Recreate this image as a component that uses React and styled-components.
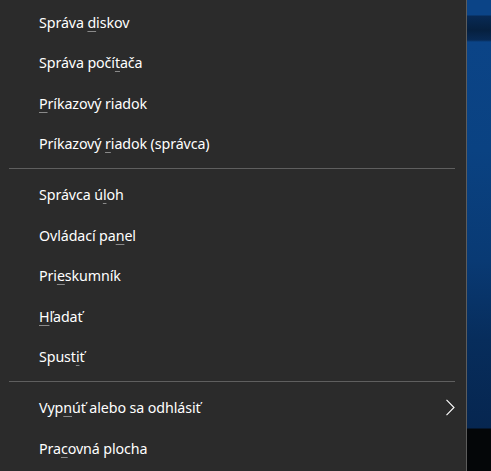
import React from "react";
import styled, { createGlobalStyle } from "styled-components";

const GlobalStyle = createGlobalStyle`
  html, body {
    margin: 0;
    padding: 0;
    background: #2b2b2b;
  }
  body {
    font-family: "Noto Sans", "Open Sans", "Liberation Sans", sans-serif;
  }
`;

const Screen = styled.div`
  display: flex;
  width: 491px;
  height: 471px;
  overflow: hidden;
`;

const Menu = styled.div`
  width: 467px;
  flex-shrink: 0;
  background: #2b2b2b;
  border-right: 1px solid #5c5c5c;
  padding-top: 2px;
  box-sizing: border-box;
`;

const Desktop = styled.div`
  flex: 1;
  background: linear-gradient(
    to bottom,
    #0b4487 0px,
    #0b4487 15px,
    #082a55 16px,
    #06203f 30px,
    #082a55 40px,
    #0b4487 42px,
    #0a4282 150px,
    #093a74 260px,
    #072d5c 340px,
    #062650 428px,
    #040608 429px,
    #040608 100%
  );
`;

const Item = styled.div`
  display: flex;
  align-items: center;
  justify-content: space-between;
  height: 40.5px;
  padding: 0 11px 0 39px;
  color: #ffffff;
  font-size: 14.25px;
  letter-spacing: -0.1px;
  white-space: nowrap;
  cursor: default;
`;

const Key = styled.span`
  text-decoration: underline;
  text-decoration-color: #8a8a8a;
  text-decoration-thickness: 1px;
  text-underline-offset: 3px;
`;

const Separator = styled.div`
  height: 1px;
  background: #5f5f5f;
  margin: 4px 11px 5.5px 9px;
`;

const Chevron = () => (
  <svg width="9" height="17" viewBox="0 0 9 17">
    <path d="M0.5 0.8 L8 8.5 L0.5 16.2" fill="none" stroke="#ffffff" strokeWidth="1.1" />
  </svg>
);

const groups = [
  [
    ["Správa ", "d", "iskov"],
    ["Správa počí", "t", "ača"],
    ["", "P", "ríkazový riadok"],
    ["Príkazový ", "r", "iadok (správca)"],
  ],
  [
    ["Správca ú", "l", "oh"],
    ["Ovládací pa", "n", "el"],
    ["Pri", "e", "skumník"],
    ["", "H", "ľadať"],
    ["Spust", "i", "ť"],
  ],
  [
    ["Vyp", "n", "úť alebo sa odhlásiť", true],
    ["Pra", "c", "ovná plocha"],
  ],
];

export default function App() {
  return (
    <>
      <GlobalStyle />
      <Screen>
        <Menu>
          {groups.map((group, gi) => (
            <React.Fragment key={gi}>
              {gi > 0 && <Separator />}
              {group.map(([before, key, after, sub]) => (
                <Item key={before + key + after}>
                  <span>
                    {before}
                    <Key>{key}</Key>
                    {after}
                  </span>
                  {sub && <Chevron />}
                </Item>
              ))}
            </React.Fragment>
          ))}
        </Menu>
        <Desktop />
      </Screen>
    </>
  );
}
